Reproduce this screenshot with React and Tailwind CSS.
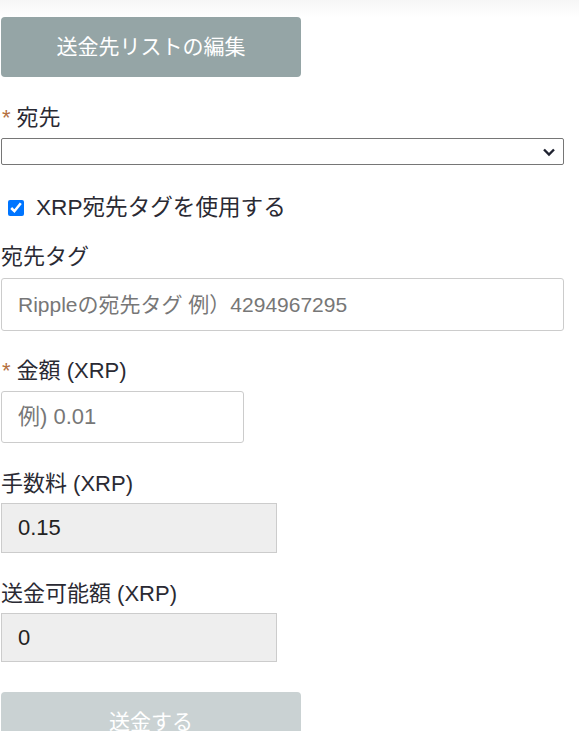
import React, { useState } from "react";

// ── 送金フォーム
const FONT = { fontFamily: "'Liberation Sans','Noto Sans CJK JP',sans-serif" };

function Label({ required, children, className = "" }) {
  return (
    <div className={`h-[28px] leading-[28px] text-[22px] text-[#2a2a33] pl-[1px] ${className}`}>
      {required && <span className="text-[#b5703f] ml-[1px] mr-[6px] text-[22px]">*</span>}
      {children}
    </div>
  );
}

export default function App() {
  const [useTag, setUseTag] = useState(true);

  return (
    <div className="min-h-screen bg-white overflow-hidden" style={FONT}>
      {/* 上部の帯 */}
      <div className="h-[17px] bg-gradient-to-b from-[#f6f6f6] to-white" />

      <div className="pl-[1px]">
        <button className="w-[300px] h-[60px] rounded-[4px] bg-[#95a5a6] text-white text-[21px]">
          送金先リストの編集
        </button>
      </div>

      <Label required className="mt-[27px]">宛先</Label>
      <div className="mt-[6px] pl-[1px] pr-[15px]">
        <div className="relative h-[27px] border border-[#767676] rounded-[2px] bg-white">
          <svg className="absolute right-[7px] top-[7px]" width="14" height="12" viewBox="0 0 14 12">
            <path d="M2 3.5 L7 8.5 L12 3.5" fill="none" stroke="#1f2230" strokeWidth="2.4" />
          </svg>
        </div>
      </div>

      {/* 宛先タグ使用 */}
      <label className="mt-[29px] h-[28px] flex items-center gap-[12px] pl-[8px] text-[22.6px] text-[#2a2a33]">
        <input
          type="checkbox"
          checked={useTag}
          onChange={e => setUseTag(e.target.checked)}
          className="w-[16px] h-[16px] accent-[#0075ff]"
        />
        <span>XRP宛先タグを使用する</span>
      </label>

      <Label className="mt-[21px]">宛先タグ</Label>
      <div className="mt-[7px] pl-[1px] pr-[15px]">
        <input
          placeholder="Rippleの宛先タグ 例）4294967295"
          className="w-full h-[53px] border border-[#ccc] rounded-[3px] px-[16px] text-[21px] text-[#333] placeholder:text-[#777] outline-none"
        />
      </div>

      <Label required className="mt-[26px]">金額 (XRP)</Label>
      <div className="mt-[6px] pl-[1px]">
        <input
          placeholder="例) 0.01"
          className="w-[243px] h-[52px] border border-[#ccc] rounded-[3px] px-[16px] text-[22px] text-[#333] placeholder:text-[#777] outline-none"
        />
      </div>

      <Label className="mt-[27px]">手数料 (XRP)</Label>
      <div className="mt-[5px] pl-[1px]">
        <input
          readOnly
          value="0.15"
          className="w-[276px] h-[50px] border border-[#ccc] bg-[#eee] px-[16px] text-[22px] text-[#222] outline-none"
        />
      </div>

      <Label className="mt-[27px]">送金可能額 (XRP)</Label>
      <div className="mt-[5px] pl-[1px]">
        <input
          readOnly
          value="0"
          className="w-[276px] h-[49px] border border-[#ccc] bg-[#eee] px-[16px] text-[22px] text-[#222] outline-none"
        />
      </div>

      <div className="mt-[30px] pl-[1px]">
        <button disabled className="w-[300px] h-[60px] rounded-[4px] bg-[#cad2d3] text-white text-[21px]">
          送金する
        </button>
      </div>
    </div>
  );
}
